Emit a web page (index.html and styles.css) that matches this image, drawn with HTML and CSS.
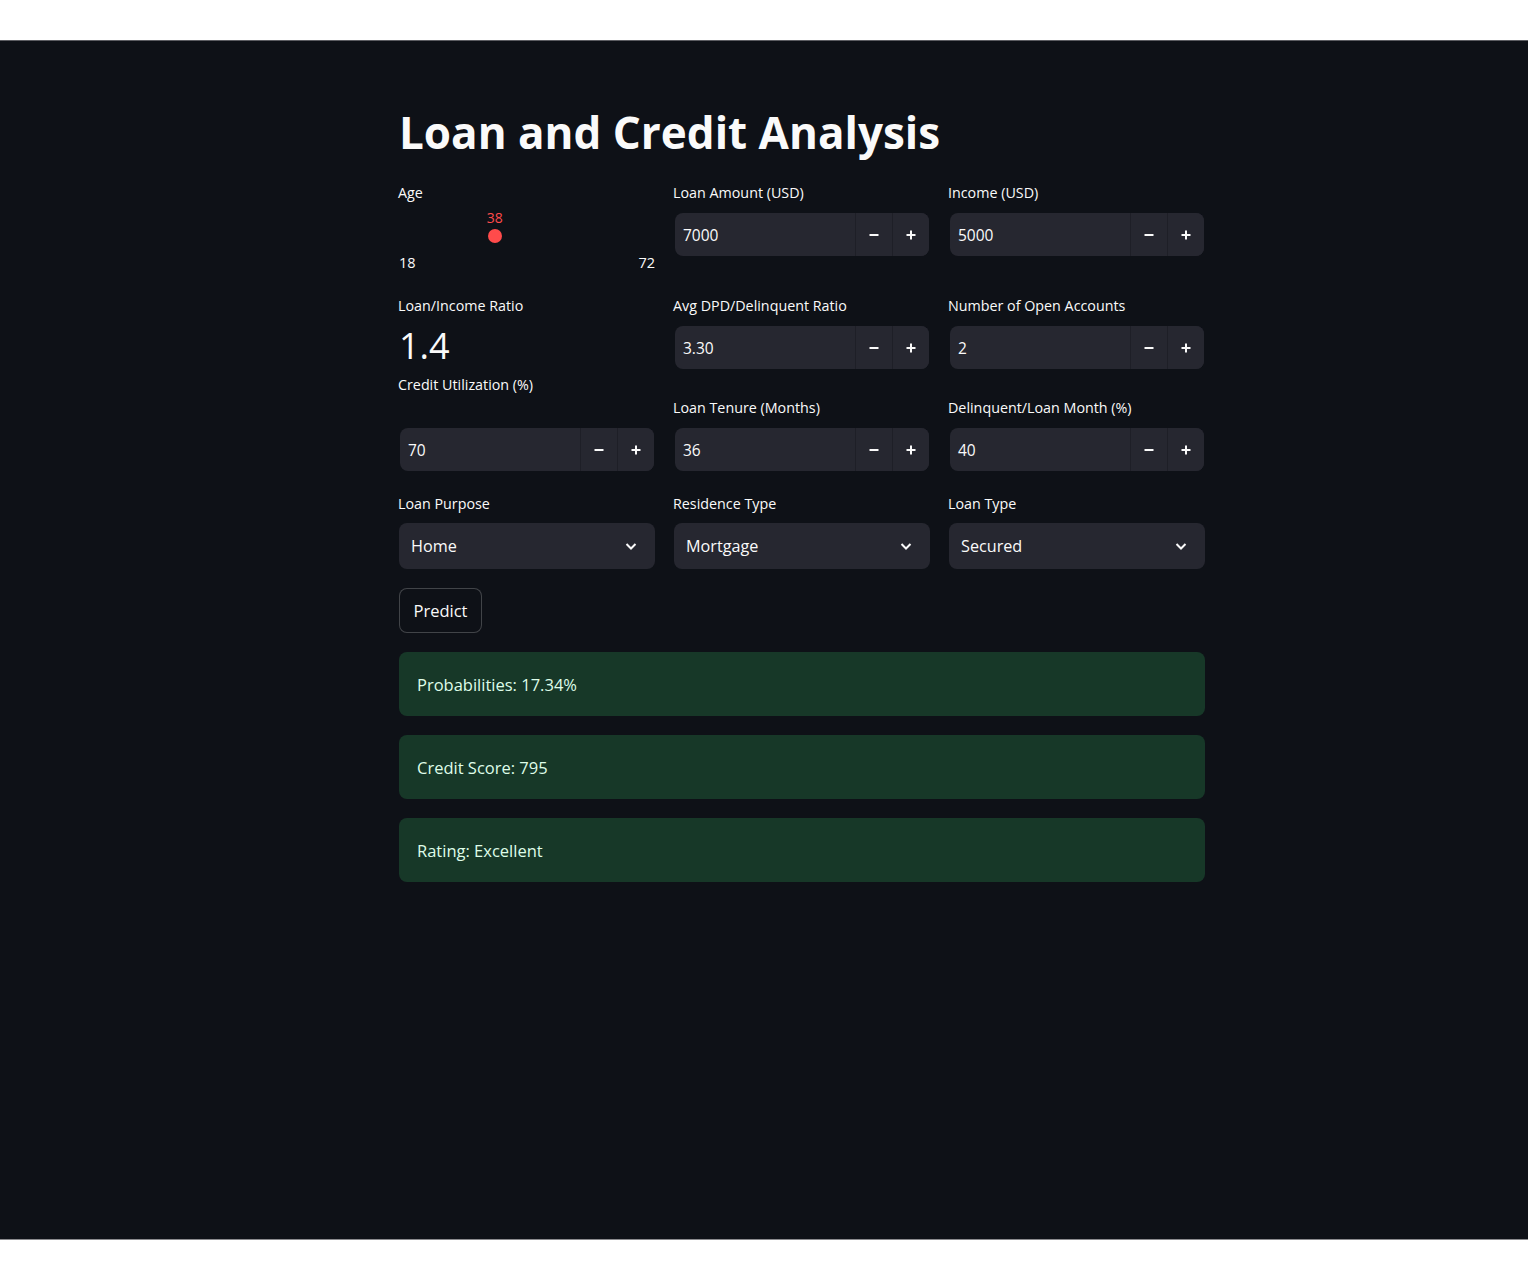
FILE: index.html
```html
<!DOCTYPE html>
<html lang="en">
<head>
<meta charset="utf-8">
<title>Loan and Credit Analysis</title>
<link rel="stylesheet" href="styles.css">
</head>
<body>
<div class="app">
  <main class="main">
    <h1 class="title">Loan and Credit Analysis</h1>

    <div class="row row1">
      <div class="col">
        <div class="label">Age</div>
        <div class="slider">
          <div class="slider-track">
            <div class="slider-thumb" style="left: 37.04%">
              <span class="slider-value">38</span>
            </div>
          </div>
          <div class="slider-ticks"><span>18</span><span>72</span></div>
        </div>
      </div>
      <div class="col">
        <div class="label">Loan Amount (USD)</div>
        <div class="numinput">
          <span class="num-value">7000</span>
          <button class="step minus"><svg width="12" height="12" viewBox="0 0 12 12"><path d="M1.5 6h9" stroke="#fafafa" stroke-width="2"/></svg></button>
          <button class="step plus"><svg width="12" height="12" viewBox="0 0 12 12"><path d="M1.5 6h9M6 1.5v9" stroke="#fafafa" stroke-width="2"/></svg></button>
        </div>
      </div>
      <div class="col">
        <div class="label">Income (USD)</div>
        <div class="numinput">
          <span class="num-value">5000</span>
          <button class="step minus"><svg width="12" height="12" viewBox="0 0 12 12"><path d="M1.5 6h9" stroke="#fafafa" stroke-width="2"/></svg></button>
          <button class="step plus"><svg width="12" height="12" viewBox="0 0 12 12"><path d="M1.5 6h9M6 1.5v9" stroke="#fafafa" stroke-width="2"/></svg></button>
        </div>
      </div>
    </div>

    <div class="row row2">
      <div class="col">
        <div class="label">Loan/Income Ratio</div>
        <div class="metric">1.4</div>
        <div class="label plain">Credit Utilization (%)</div>
      </div>
      <div class="col">
        <div class="label">Avg DPD/Delinquent Ratio</div>
        <div class="numinput">
          <span class="num-value">3.30</span>
          <button class="step minus"><svg width="12" height="12" viewBox="0 0 12 12"><path d="M1.5 6h9" stroke="#fafafa" stroke-width="2"/></svg></button>
          <button class="step plus"><svg width="12" height="12" viewBox="0 0 12 12"><path d="M1.5 6h9M6 1.5v9" stroke="#fafafa" stroke-width="2"/></svg></button>
        </div>
      </div>
      <div class="col">
        <div class="label">Number of Open Accounts</div>
        <div class="numinput">
          <span class="num-value">2</span>
          <button class="step minus"><svg width="12" height="12" viewBox="0 0 12 12"><path d="M1.5 6h9" stroke="#fafafa" stroke-width="2"/></svg></button>
          <button class="step plus"><svg width="12" height="12" viewBox="0 0 12 12"><path d="M1.5 6h9M6 1.5v9" stroke="#fafafa" stroke-width="2"/></svg></button>
        </div>
      </div>
    </div>

    <div class="row row3">
      <div class="col">
        <div class="label hidden">Credit Utilization (%)</div>
        <div class="numinput">
          <span class="num-value">70</span>
          <button class="step minus"><svg width="12" height="12" viewBox="0 0 12 12"><path d="M1.5 6h9" stroke="#fafafa" stroke-width="2"/></svg></button>
          <button class="step plus"><svg width="12" height="12" viewBox="0 0 12 12"><path d="M1.5 6h9M6 1.5v9" stroke="#fafafa" stroke-width="2"/></svg></button>
        </div>
      </div>
      <div class="col">
        <div class="label">Loan Tenure (Months)</div>
        <div class="numinput">
          <span class="num-value">36</span>
          <button class="step minus"><svg width="12" height="12" viewBox="0 0 12 12"><path d="M1.5 6h9" stroke="#fafafa" stroke-width="2"/></svg></button>
          <button class="step plus"><svg width="12" height="12" viewBox="0 0 12 12"><path d="M1.5 6h9M6 1.5v9" stroke="#fafafa" stroke-width="2"/></svg></button>
        </div>
      </div>
      <div class="col">
        <div class="label">Delinquent/Loan Month (%)</div>
        <div class="numinput">
          <span class="num-value">40</span>
          <button class="step minus"><svg width="12" height="12" viewBox="0 0 12 12"><path d="M1.5 6h9" stroke="#fafafa" stroke-width="2"/></svg></button>
          <button class="step plus"><svg width="12" height="12" viewBox="0 0 12 12"><path d="M1.5 6h9M6 1.5v9" stroke="#fafafa" stroke-width="2"/></svg></button>
        </div>
      </div>
    </div>

    <div class="row row4">
      <div class="col">
        <div class="label sel-label">Loan Purpose</div>
        <div class="select">
          <span class="sel-value">Home</span>
          <svg class="chevron" width="14" height="14" viewBox="0 0 14 14"><path d="M2.5 5l4.5 4.5L11.5 5" fill="none" stroke="#fafafa" stroke-width="2"/></svg>
        </div>
      </div>
      <div class="col">
        <div class="label sel-label">Residence Type</div>
        <div class="select">
          <span class="sel-value">Mortgage</span>
          <svg class="chevron" width="14" height="14" viewBox="0 0 14 14"><path d="M2.5 5l4.5 4.5L11.5 5" fill="none" stroke="#fafafa" stroke-width="2"/></svg>
        </div>
      </div>
      <div class="col">
        <div class="label sel-label">Loan Type</div>
        <div class="select">
          <span class="sel-value">Secured</span>
          <svg class="chevron" width="14" height="14" viewBox="0 0 14 14"><path d="M2.5 5l4.5 4.5L11.5 5" fill="none" stroke="#fafafa" stroke-width="2"/></svg>
        </div>
      </div>
    </div>

    <button class="predict">Predict</button>

    <div class="results">
      <div class="success">Probabilities: 17.34%</div>
      <div class="success">Credit Score: 795</div>
      <div class="success">Rating: Excellent</div>
    </div>
  </main>
</div>
</body>
</html>
```

FILE: styles.css
```css
html, body {
  margin: 0;
  padding: 0;
  background: #ffffff;
}

body {
  font-family: "Open Sans", "Noto Sans", sans-serif;
  color: #fafafa;
}

.app {
  margin-top: 40px;
  height: 1198px;
  background: #0e1117;
  border-top: 1px solid #5c5d62;
  border-bottom: 1px solid #8a8b8e;
}

.main {
  width: 806px;
  margin-left: 399px;
  padding-top: 64px;
}

.title {
  margin: 0;
  font-size: 44px;
  font-weight: 700;
  line-height: 54px;
  letter-spacing: 0;
  color: #fafafa;
}

.row {
  display: grid;
  grid-template-columns: repeat(3, 256px);
  column-gap: 19px;
}

.row1 { margin-top: 24px; }
.row2 { margin-top: 23px; }
.row3 { margin-top: 3px; }
.row4 { margin-top: 23px; }

.col {
  display: flex;
  flex-direction: column;
  min-width: 0;
}

.label {
  font-size: 14.3px;
  line-height: 20px;
  height: 20px;
  margin-bottom: 10px;
  margin-left: -1px;
  color: #fafafa;
  white-space: nowrap;
}

.label.hidden {
  visibility: hidden;
}

.label.plain {
  margin-top: 9px;
  margin-bottom: 0;
}

.sel-label {
  margin-bottom: 9px;
}

/* slider */
.slider {
  position: relative;
  height: 60px;
}

.slider-track {
  position: relative;
  height: 40px;
}

.slider-thumb {
  position: absolute;
  top: 16px;
  width: 14px;
  height: 14px;
  margin-left: -6px;
  border-radius: 50%;
  background: #ff4b4b;
}

.slider-value {
  position: absolute;
  bottom: 16px;
  left: 50%;
  transform: translateX(-50%);
  font-size: 14px;
  line-height: 18px;
  color: #ff4b4b;
}

.slider-ticks {
  display: flex;
  justify-content: space-between;
  font-size: 14.5px;
  line-height: 20px;
}

/* number input */
.numinput {
  display: flex;
  align-items: stretch;
  height: 43px;
  margin-left: 1px;
  margin-right: 1px;
  background: #262730;
  border-radius: 8px;
  overflow: hidden;
}

.num-value {
  flex: 1;
  display: flex;
  align-items: center;
  padding-left: 8px;
  font-size: 15.5px;
  color: #fafafa;
}

.step {
  width: 37px;
  padding: 0;
  border: none;
  border-left: 1px solid #1e1f27;
  background: #262730;
  display: flex;
  align-items: center;
  justify-content: center;
  cursor: pointer;
}

/* select */
.select {
  display: flex;
  align-items: center;
  justify-content: space-between;
  height: 46px;
  padding: 0 17px 0 12px;
  background: #262730;
  border-radius: 8px;
}

.sel-value {
  font-size: 16.2px;
  color: #fafafa;
}

/* metric */
.metric {
  font-size: 36px;
  line-height: 40px;
  height: 40px;
  margin-top: 0;
  color: #fafafa;
}

/* button */
.predict {
  display: block;
  margin-top: 19px;
  height: 45px;
  width: 83px;
  padding: 0;
  font-family: inherit;
  font-size: 16.5px;
  color: #fafafa;
  background: #0e1117;
  border: 1px solid rgba(250, 250, 250, 0.22);
  border-radius: 8px;
}

/* results */
.results {
  display: flex;
  flex-direction: column;
  gap: 19px;
  margin-top: 19px;
}

.success {
  height: 64px;
  display: flex;
  align-items: center;
  padding: 0 18px;
  font-size: 16.5px;
  color: #dffde9;
  background: #173828;
  border-radius: 8px;
}
```
